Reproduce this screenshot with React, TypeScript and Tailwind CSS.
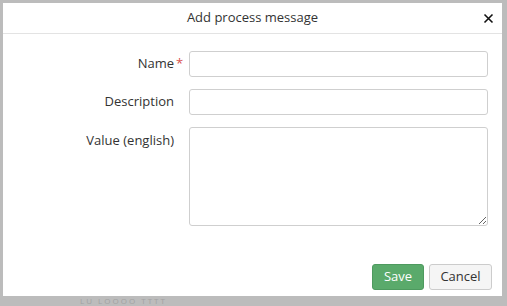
import React from "react";

export default function App() {
  return (
    <div
      className="w-[507px] h-[306px] bg-[#bcbcbc] relative overflow-hidden"
      style={{ fontFamily: '"Open Sans", "Noto Sans", sans-serif' }}
    >
      <div className="absolute left-[80px] top-[297px] text-[8px] leading-[8px] tracking-[2px] text-[#a2a2a2]">
        LU LOOOO TTTT
      </div>
      <div className="absolute left-[3px] top-[3px] w-[499px] h-[293px] bg-white flex flex-col">
        <div className="h-[31px] border-b border-[#e3e3e3] flex items-center justify-center relative">
          <span className="text-[13px] text-[#333]">Add process message</span>
          <span className="absolute right-[8px] top-[10px] text-[#111]">
            <svg width="11" height="11" viewBox="0 0 11 11">
              <path d="M1.5 1.5 L9.5 9.5 M9.5 1.5 L1.5 9.5" stroke="#111" strokeWidth="1.6" />
            </svg>
          </span>
        </div>
        <div className="flex flex-col gap-[12px] pt-[17px] pl-[186px] pr-[14px]">
          <div className="flex items-center h-[26px] relative">
            <label className="absolute right-[314px] text-[13px] text-[#333] whitespace-nowrap">
              Name
              <span className="absolute left-full ml-[2px] top-0 text-[#d9534f]">*</span>
            </label>
            <input className="w-full h-[26px] border border-[#cfcfcf] rounded-[3px] outline-none" />
          </div>
          <div className="flex items-center h-[26px] relative">
            <label className="absolute right-[314px] text-[13px] text-[#333] whitespace-nowrap">
              Description
            </label>
            <input className="w-full h-[26px] border border-[#cfcfcf] rounded-[3px] outline-none" />
          </div>
          <div className="flex items-start h-[99px] relative">
            <label className="absolute right-[314px] top-[4px] text-[13px] text-[#333] whitespace-nowrap">
              Value (english)
            </label>
            <textarea className="w-full h-[99px] border border-[#cfcfcf] rounded-[3px] outline-none resize-y block" />
          </div>
        </div>
        <div className="flex justify-end gap-[5px] pr-[10px] mt-[38px]">
          <button className="w-[52px] h-[26px] rounded-[3px] bg-[#5aaa6b] border border-[#4e9a5f] text-white text-[13px]">
            Save
          </button>
          <button className="w-[63px] h-[26px] rounded-[3px] bg-[#f5f5f5] border border-[#cccccc] text-[#333] text-[13px]">
            Cancel
          </button>
        </div>
      </div>
    </div>
  );
}
